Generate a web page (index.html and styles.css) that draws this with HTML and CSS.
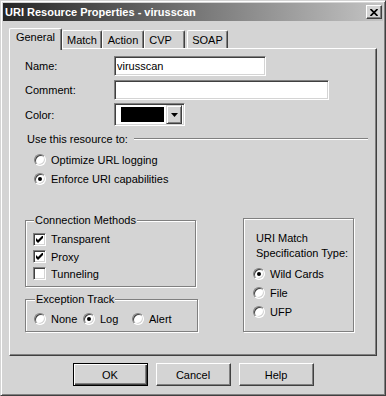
FILE: index.html
```html
<!DOCTYPE html>
<html lang="en">
<head>
  <meta charset="UTF-8">
  <title>URI Resource Properties - virusscan</title>
  <link rel="stylesheet" href="styles.css">
</head>
<body>
  <div class="window">
    <div class="titlebar">
      <span class="title">URI Resource Properties - virusscan</span>
      <button class="close-btn" aria-label="Close">
        <svg width="8" height="7" viewBox="0 0 8 7"><path d="M0.5 0 L7.5 7 M7.5 0 L0.5 7" stroke="#000" stroke-width="1.7"/></svg>
      </button>
    </div>

    <div class="dialog-body">
      <div class="tabs">
        <div class="tab tab-general active">General</div>
        <div class="tab tab-match">Match</div>
        <div class="tab tab-action">Action</div>
        <div class="tab tab-cvp">CVP</div>
        <div class="tab tab-soap">SOAP</div>
      </div>

      <div class="panel">
        <div class="field">
          <span class="field-label">Name:</span>
          <input class="text-input input-name" type="text" value="virusscan">
        </div>
        <div class="field">
          <span class="field-label">Comment:</span>
          <input class="text-input input-comment" type="text" value="">
        </div>
        <div class="field field-color">
          <span class="field-label">Color:</span>
          <div class="combo">
            <span class="swatch"></span>
            <span class="combo-btn">
              <svg width="7" height="4" viewBox="0 0 7 4"><polygon points="0,0 7,0 3.5,4" fill="#000"/></svg>
            </span>
          </div>
        </div>

        <div class="section-head">
          <span>Use this resource to:</span>
          <span class="etched-line"></span>
        </div>
        <div class="use-options">
          <div class="option"><span class="radio"></span>Optimize URL logging</div>
          <div class="option"><span class="radio checked"></span>Enforce URI capabilities</div>
        </div>

        <div class="groups">
          <div class="left-col">
            <fieldset class="group group-conn">
              <legend>Connection Methods</legend>
              <div class="option"><span class="check checked"><svg width="7" height="7" viewBox="0 0 7 7"><path d="M0 2 L2 4 L7 -1 L7 2 L2 7 L0 5 Z" fill="#000"/></svg></span>Transparent</div>
              <div class="option"><span class="check checked"><svg width="7" height="7" viewBox="0 0 7 7"><path d="M0 2 L2 4 L7 -1 L7 2 L2 7 L0 5 Z" fill="#000"/></svg></span>Proxy</div>
              <div class="option"><span class="check"></span>Tunneling</div>
            </fieldset>
            <fieldset class="group group-exc">
              <legend>Exception Track</legend>
              <div class="inline-options">
                <div class="option"><span class="radio"></span>None</div>
                <div class="option"><span class="radio checked"></span>Log</div>
                <div class="option"><span class="radio"></span>Alert</div>
              </div>
            </fieldset>
          </div>

          <div class="group group-match">
            <div class="caption">URI Match<br>Specification Type:</div>
            <div class="match-options">
              <div class="option"><span class="radio checked"></span>Wild Cards</div>
              <div class="option"><span class="radio"></span>File</div>
              <div class="option"><span class="radio"></span>UFP</div>
            </div>
          </div>
        </div>
      </div>

      <div class="buttons">
        <button class="btn default">OK</button>
        <button class="btn">Cancel</button>
        <button class="btn">Help</button>
      </div>
    </div>
  </div>
</body>
</html>
```

FILE: styles.css
```css
* {
  box-sizing: border-box;
}

body {
  margin: 0;
  font-family: "Liberation Sans", Arial, sans-serif;
  font-size: 11px;
  color: #000;
  background-color: #d4d4d4;
}

.window {
  width: 386px;
  height: 396px;
  padding: 2px;
  border: 1px solid;
  border-color: #d4d4d4 #404040 #404040 #d4d4d4;
  box-shadow: inset 1px 1px 0 #fff, inset -1px -1px 0 #808080;
  background-color: #d4d4d4;
  display: flex;
  flex-direction: column;
}

/* title bar */
.titlebar {
  height: 18px;
  display: flex;
  align-items: center;
  justify-content: space-between;
  padding: 0 1px 0 2px;
  background: linear-gradient(to right, #262626, #c4c4c4);
}

.title {
  color: #fff;
  font-weight: bold;
  font-size: 11px;
}

.close-btn {
  width: 16px;
  height: 14px;
  padding: 0;
  display: flex;
  align-items: center;
  justify-content: center;
  background-color: #d4d4d4;
  border: 1px solid;
  border-color: #fff #404040 #404040 #fff;
  box-shadow: inset -1px -1px 0 #808080;
}

.dialog-body {
  flex: 1;
  padding: 7px 6px 0 6px;
}

/* tabs */
.tabs {
  height: 20px;
  display: flex;
  align-items: flex-end;
}

.tab {
  height: 18px;
  line-height: 18px;
  text-align: center;
  background-color: #d4d4d4;
  border-top: 1px solid #fff;
  border-left: 1px solid #fff;
  border-right: 1px solid #404040;
  border-radius: 2px 2px 0 0;
  box-shadow: inset -1px 0 0 #808080;
}

.tab.active {
  height: 22px;
  margin-bottom: -2px;
  position: relative;
  z-index: 1;
  line-height: 17px;
}

.tab-general { width: 53px; }
.tab-match { width: 40px; }
.tab-action { width: 42px; }
.tab-cvp { width: 41px; padding-right: 8px; }
.tab-soap { width: 41px; margin-left: 2px; }

.panel {
  height: 308px;
  padding: 7px 0 0 15px;
  border: 1px solid;
  border-color: #fff #404040 #404040 #fff;
  box-shadow: inset -1px -1px 0 #808080;
}

/* form fields */
.field {
  height: 20px;
  display: flex;
  align-items: center;
  margin-bottom: 4px;
}

.field-color {
  height: 23px;
  margin-top: -1px;
}

.field-label {
  width: 89px;
}

.text-input {
  height: 20px;
  padding: 0 2px;
  font: inherit;
  color: #000;
  background-color: #fff;
  border: 1px solid;
  border-color: #808080 #fff #fff #808080;
  box-shadow: inset 1px 1px 0 #404040, inset -1px -1px 0 #d4d4d4;
  outline: none;
}

.input-name { width: 152px; }
.input-comment { width: 215px; }

.combo {
  width: 71px;
  height: 23px;
  display: flex;
  align-items: center;
  padding: 1px 2px 1px 6px;
  background-color: #fff;
  border: 1px solid;
  border-color: #808080 #fff #fff #808080;
  box-shadow: inset 1px 1px 0 #404040, inset -1px -1px 0 #d4d4d4;
}

.swatch {
  width: 43px;
  height: 15px;
  background-color: #000;
}

.combo-btn {
  width: 16px;
  height: 19px;
  margin-left: auto;
  display: flex;
  align-items: center;
  justify-content: center;
  background-color: #d4d4d4;
  border: 1px solid;
  border-color: #d4d4d4 #404040 #404040 #d4d4d4;
  box-shadow: inset 1px 1px 0 #fff, inset -1px -1px 0 #808080;
}

/* use this resource to */
.section-head {
  height: 13px;
  margin: 6px 8px 0 2px;
  display: flex;
  align-items: center;
}

.etched-line {
  flex: 1;
  height: 2px;
  margin-left: 6px;
  border-top: 1px solid #808080;
  border-bottom: 1px solid #fff;
}

.use-options {
  margin: 5px 0 0 9px;
}

.use-options .option {
  height: 19px;
}

.option {
  display: flex;
  align-items: center;
  height: 17px;
  white-space: nowrap;
}

/* radio and check glyphs */
.radio,
.check {
  flex: none;
  display: flex;
  align-items: center;
  justify-content: center;
  background-color: #fff;
  border: 1px solid;
  border-color: #808080 #fff #fff #808080;
  box-shadow: inset 1px 1px 0 #404040, inset -1px -1px 0 #d4d4d4;
}

.radio {
  width: 12px;
  height: 12px;
  border-radius: 50%;
  margin-right: 5px;
}

.radio.checked::after {
  content: "";
  width: 4px;
  height: 4px;
  border-radius: 50%;
  background-color: #000;
}

.check {
  width: 13px;
  height: 13px;
  margin-right: 5px;
}

/* group boxes */
.groups {
  display: flex;
  align-items: flex-end;
  margin-top: 26px;
}

.left-col {
  width: 173px;
}

.group {
  margin: 0;
  border: 1px solid #808080;
  box-shadow: inset 1px 1px 0 #fff, 1px 1px 0 #fff;
}

.group legend {
  padding: 0 1px;
  margin-left: 1px;
  line-height: 13px;
  background-color: #d4d4d4;
}

.group-conn {
  width: 171px;
  padding: 3px 0 4px 7px;
}

.group-conn .option:first-of-type {
  height: 18px;
}

.group-exc {
  width: 173px;
  margin-top: 6px;
  padding: 4px 0 4px 8px;
}

.inline-options {
  display: flex;
}

.inline-options .option {
  width: 49px;
}

.group-match {
  width: 111px;
  height: 114px;
  margin-left: 45px;
  padding: 12px 0 0 9px;
}

.caption {
  line-height: 15px;
  margin-left: 3px;
}

.match-options {
  margin-top: 3px;
}

.match-options .option {
  height: 19px;
}

/* dialog buttons */
.buttons {
  display: flex;
  justify-content: center;
  gap: 8px;
  margin-top: 7px;
}

.btn {
  width: 75px;
  height: 23px;
  padding: 0;
  font: inherit;
  color: #000;
  background-color: #d4d4d4;
  border: 1px solid;
  border-color: #fff #404040 #404040 #fff;
  box-shadow: inset -1px -1px 0 #808080;
}

.btn.default {
  border-color: #000;
  box-shadow: inset 1px 1px 0 #fff, inset -1px -1px 0 #404040, inset -2px -2px 0 #808080;
}
```
